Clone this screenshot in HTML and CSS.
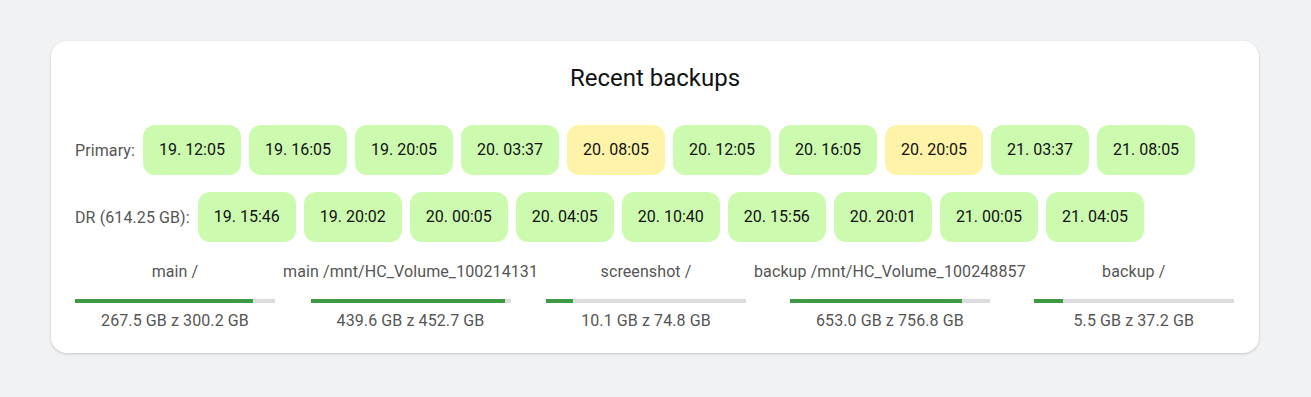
FILE: index.html
```html
<!DOCTYPE html>
<html lang="en">
<head>
    <meta charset="UTF-8">
    <title>Recent backups</title>
    <link rel="stylesheet" href="styles.css">
</head>
<body>
<div class="card">
    <h1 class="title">Recent backups</h1>
    <div class="rows">
        <div class="row">
            <span class="row-label">Primary:</span>
            <span class="chip">19. 12:05</span>
            <span class="chip">19. 16:05</span>
            <span class="chip">19. 20:05</span>
            <span class="chip">20. 03:37</span>
            <span class="chip warn">20. 08:05</span>
            <span class="chip">20. 12:05</span>
            <span class="chip">20. 16:05</span>
            <span class="chip warn">20. 20:05</span>
            <span class="chip">21. 03:37</span>
            <span class="chip">21. 08:05</span>
        </div>
        <div class="row">
            <span class="row-label">DR (614.25 GB):</span>
            <span class="chip">19. 15:46</span>
            <span class="chip">19. 20:02</span>
            <span class="chip">20. 00:05</span>
            <span class="chip">20. 04:05</span>
            <span class="chip">20. 10:40</span>
            <span class="chip">20. 15:56</span>
            <span class="chip">20. 20:01</span>
            <span class="chip">21. 00:05</span>
            <span class="chip">21. 04:05</span>
        </div>
    </div>
    <div class="disks">
        <div class="disk">
            <div class="disk-name">main /</div>
            <div class="bar"><div class="fill" style="width: 89.1%"></div></div>
            <div class="disk-size">267.5 GB z 300.2 GB</div>
        </div>
        <div class="disk">
            <div class="disk-name">main /mnt/HC_Volume_100214131</div>
            <div class="bar"><div class="fill" style="width: 97.1%"></div></div>
            <div class="disk-size">439.6 GB z 452.7 GB</div>
        </div>
        <div class="disk">
            <div class="disk-name">screenshot /</div>
            <div class="bar"><div class="fill" style="width: 13.5%"></div></div>
            <div class="disk-size">10.1 GB z 74.8 GB</div>
        </div>
        <div class="disk">
            <div class="disk-name">backup /mnt/HC_Volume_100248857</div>
            <div class="bar"><div class="fill" style="width: 86.3%"></div></div>
            <div class="disk-size">653.0 GB z 756.8 GB</div>
        </div>
        <div class="disk">
            <div class="disk-name">backup /</div>
            <div class="bar"><div class="fill" style="width: 14.8%"></div></div>
            <div class="disk-size">5.5 GB z 37.2 GB</div>
        </div>
    </div>
</div>
</body>
</html>
```

FILE: styles.css
```css
body {
    font-family: Roboto, "Liberation Sans", sans-serif;
    margin: 0;
    background: #f1f2f4;
    padding: 41px 52px 44px 51px;
}

.card {
    background: #fff;
    border-radius: 16px;
    box-shadow: 0 1px 3px rgba(0, 0, 0, 0.18);
    padding: 24px 24px 23px 24px;
}

.title {
    margin: 0;
    font-size: 24px;
    font-weight: 400;
    line-height: 26px;
    text-align: center;
    color: #111;
}

.rows {
    margin-top: 34px;
    display: flex;
    flex-direction: column;
    gap: 17px;
}

.row {
    display: flex;
    align-items: center;
    gap: 8px;
}

.row-label {
    font-size: 16px;
    letter-spacing: 0.1px;
    color: #555;
}

.chip {
    height: 50px;
    line-height: 50px;
    padding: 0 16px;
    border-radius: 12px;
    background: #ccfbb0;
    font-size: 16px;
    color: #111;
}

.chip.warn {
    background: #fef3a8;
}

.disks {
    margin-top: 21px;
    display: flex;
    gap: 8px;
}

.disk {
    display: flex;
    flex-direction: column;
    align-items: center;
    font-size: 16px;
    letter-spacing: 0.1px;
    color: #555;
}

.disk-name {
    line-height: 18px;
    white-space: nowrap;
}

.bar {
    width: 200px;
    height: 4px;
    margin-top: 18px;
    background: #dcdcdf;
}

.fill {
    height: 100%;
    background: #3e9a42;
}

.disk-size {
    margin-top: 9px;
    line-height: 18px;
}
```
